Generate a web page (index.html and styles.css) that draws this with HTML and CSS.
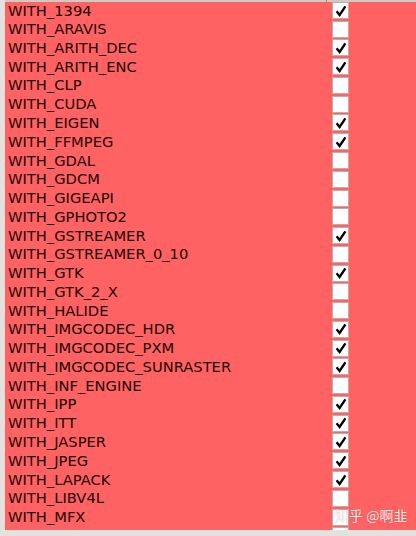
FILE: index.html
```html
<!DOCTYPE html>
<html>
<head>
<meta charset="utf-8">
<link rel="stylesheet" href="styles.css">
</head>
<body>
<div class="frame">
  <div class="table">
    <div class="header"><span class="hcol"></span></div>
    <div class="rows" id="rows">
      <div class="row"><span class="name">WITH_1394</span><span class="cell"><span class="box on"></span></span></div>
      <div class="row"><span class="name">WITH_ARAVIS</span><span class="cell"><span class="box"></span></span></div>
      <div class="row"><span class="name">WITH_ARITH_DEC</span><span class="cell"><span class="box on"></span></span></div>
      <div class="row"><span class="name">WITH_ARITH_ENC</span><span class="cell"><span class="box on"></span></span></div>
      <div class="row"><span class="name">WITH_CLP</span><span class="cell"><span class="box"></span></span></div>
      <div class="row"><span class="name">WITH_CUDA</span><span class="cell"><span class="box"></span></span></div>
      <div class="row"><span class="name">WITH_EIGEN</span><span class="cell"><span class="box on"></span></span></div>
      <div class="row"><span class="name">WITH_FFMPEG</span><span class="cell"><span class="box on"></span></span></div>
      <div class="row"><span class="name">WITH_GDAL</span><span class="cell"><span class="box"></span></span></div>
      <div class="row"><span class="name">WITH_GDCM</span><span class="cell"><span class="box"></span></span></div>
      <div class="row"><span class="name">WITH_GIGEAPI</span><span class="cell"><span class="box"></span></span></div>
      <div class="row"><span class="name">WITH_GPHOTO2</span><span class="cell"><span class="box"></span></span></div>
      <div class="row"><span class="name">WITH_GSTREAMER</span><span class="cell"><span class="box on"></span></span></div>
      <div class="row"><span class="name">WITH_GSTREAMER_0_10</span><span class="cell"><span class="box"></span></span></div>
      <div class="row"><span class="name">WITH_GTK</span><span class="cell"><span class="box on"></span></span></div>
      <div class="row"><span class="name">WITH_GTK_2_X</span><span class="cell"><span class="box"></span></span></div>
      <div class="row"><span class="name">WITH_HALIDE</span><span class="cell"><span class="box"></span></span></div>
      <div class="row"><span class="name">WITH_IMGCODEC_HDR</span><span class="cell"><span class="box on"></span></span></div>
      <div class="row"><span class="name">WITH_IMGCODEC_PXM</span><span class="cell"><span class="box on"></span></span></div>
      <div class="row"><span class="name">WITH_IMGCODEC_SUNRASTER</span><span class="cell"><span class="box on"></span></span></div>
      <div class="row"><span class="name">WITH_INF_ENGINE</span><span class="cell"><span class="box"></span></span></div>
      <div class="row"><span class="name">WITH_IPP</span><span class="cell"><span class="box on"></span></span></div>
      <div class="row"><span class="name">WITH_ITT</span><span class="cell"><span class="box on"></span></span></div>
      <div class="row"><span class="name">WITH_JASPER</span><span class="cell"><span class="box on"></span></span></div>
      <div class="row"><span class="name">WITH_JPEG</span><span class="cell"><span class="box on"></span></span></div>
      <div class="row"><span class="name">WITH_LAPACK</span><span class="cell"><span class="box on"></span></span></div>
      <div class="row"><span class="name">WITH_LIBV4L</span><span class="cell"><span class="box"></span></span></div>
      <div class="row"><span class="name">WITH_MFX</span><span class="cell"><span class="box"></span></span></div>
      <div class="row"><span class="name">WITH_NGRAPH</span><span class="cell"><span class="box"></span></span></div>
    </div>
    <div class="watermark">知乎 @啊韭</div>
  </div>
</div>
<script>
document.querySelectorAll('.box.on').forEach(function(b){
  b.innerHTML = '<svg width="14" height="14" viewBox="0 0 14 14"><path d="M2.6 7.2 L5.6 11 L11.4 2.4" fill="none" stroke="#000" stroke-width="2.3" stroke-linecap="butt" stroke-linejoin="miter"/></svg>';
});
</script>
</body>
</html>
```

FILE: styles.css
```css
html, body {
  margin: 0;
  padding: 0;
  background: #e4e1de;
  width: 416px;
  height: 536px;
  overflow: hidden;
}
.frame {
  padding-left: 5px;
  height: 530px;
}
.table {
  position: relative;
  height: 530px;
  overflow: hidden;
  background: #ff6262;
  display: flex;
  flex-direction: column;
}
.header {
  height: 2px;
  background: #d3c9c3;
  flex: none;
  display: flex;
}
.hcol {
  width: 321px;
  border-right: 1px solid #9a8a86;
}
.rows {
  display: flex;
  flex-direction: column;
}
.row {
  height: 18.78px;
  display: flex;
  align-items: center;
  flex: none;
}
.row:first-child {
  height: 17.78px;
}
.name {
  width: 324px;
  padding-left: 3px;
  font-family: "DejaVu Sans", sans-serif;
  font-size: 14.7px;
  color: #1c0606;
  white-space: nowrap;
  line-height: 18px;
}
.cell {
  display: flex;
  align-items: center;
}
.box {
  width: 15px;
  height: 15px;
  background: #fff;
  border: 1px solid #c9a8a8;
  display: flex;
  align-items: center;
  justify-content: center;
}
.watermark {
  position: absolute;
  left: 330px;
  top: 505px;
  font-family: "Noto Sans CJK SC", sans-serif;
  font-size: 14px;
  color: rgba(255, 255, 255, 0.88);
  text-shadow: 0 0 1px rgba(120, 60, 60, 0.45);
  white-space: nowrap;
}
```
